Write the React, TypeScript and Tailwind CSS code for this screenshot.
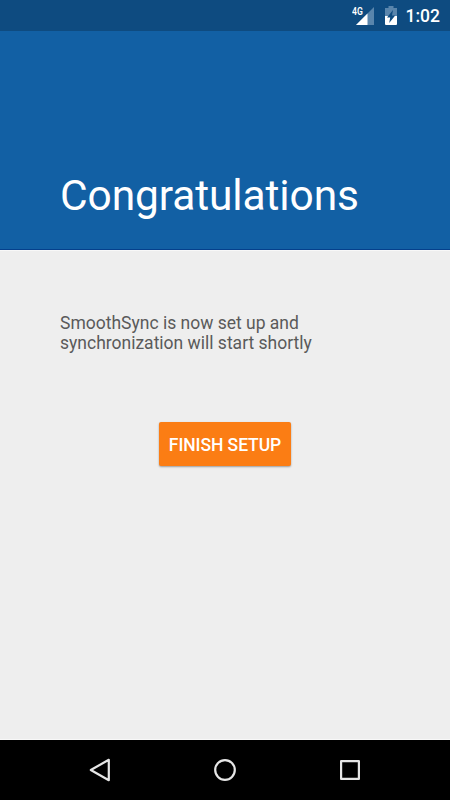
const SignalIcon = () => {
	return (
		<svg width="24" height="20" viewBox="0 0 24 20">
			<path d="M22 2v18H4z" fill="#5985ac" />
			<path d="M15.5 8.5V20H4z" fill="#fff" />
			<text
				x="0"
				y="10"
				fill="#fff"
				fontSize="10.8"
				fontWeight="600"
				textLength="10.8"
				lengthAdjust="spacingAndGlyphs"
				className="font-['Roboto',sans-serif]">
				4G
			</text>
		</svg>
	);
};

const BatteryIcon = () => {
	return (
		<svg width="13" height="19" viewBox="0 0 13 19">
			<path d="M3.5 0h5v2H12v8H0V2h3.5z" fill="#5985ac" />
			<path d="M0 10h12v8a1 1 0 0 1-1 1H1a1 1 0 0 1-1-1z" fill="#fff" />
			<path d="M8 4 2 11.5h3.2l-1 5.5 6-7.5H7z" fill="#0e4b80" />
		</svg>
	);
};

const StatusBar = () => {
	return (
		<div className="flex justify-end h-[31px] pr-[10px] bg-[#0e4b80] text-white">
			<div className="pt-[5px]">
				<SignalIcon />
			</div>
			<div className="pt-[6px] ml-[9px]">
				<BatteryIcon />
			</div>
			<p className="ml-[8px] pt-[6px] text-[17.5px] leading-[21px] font-medium">
				1:02
			</p>
		</div>
	);
};

const NavigationBar = () => {
	return (
		<div className="flex items-center justify-center h-[60px] gap-[101px] bg-black">
			<svg
				width="24"
				height="24"
				fill="none"
				stroke="#e6e6e6"
				strokeWidth="2.2"
				strokeLinejoin="round">
				<path d="M2.8 12 20.8 1.8v20.4z" />
			</svg>
			<svg width="24" height="24" fill="none" stroke="#e6e6e6" strokeWidth="2.2">
				<circle cx="12" cy="12" r="9.8" />
			</svg>
			<svg
				width="24"
				height="24"
				fill="none"
				stroke="#e6e6e6"
				strokeWidth="2.2"
				strokeLinejoin="round">
				<path d="M3.1 3.1h17.8v17.8H3.1z" />
			</svg>
		</div>
	);
};

const App = () => {
	return (
		<div className="flex flex-col w-[450px] h-[800px] overflow-hidden bg-[#eeeeee] font-['Roboto',sans-serif]">
			<StatusBar />
			<header className="h-[219px] px-[60px] pt-[140px] bg-[#1260a4] border-b border-[#05408c]">
				<h1 className="text-[42.5px] leading-[50px] tracking-[-0.12px] text-white">
					Congratulations
				</h1>
			</header>

			<main className="flex flex-col items-center flex-1 border-y border-[#f8f8f8]">
				<p className="w-[330px] mt-[62px] text-[17.5px] leading-[20.4px] text-[#5a5a5a]">
					SmoothSync is now set up and
					<br />
					synchronization will start shortly
				</p>
				<button className="w-[132px] h-[44.5px] mt-[67.7px] pt-[3px] rounded-[2px] bg-[#fb7d14] text-[17.5px] font-medium tracking-[-0.08px] text-white whitespace-nowrap shadow-[0_1px_2px_rgba(0,0,0,0.35)]">
					FINISH SETUP
				</button>
			</main>

			<NavigationBar />
		</div>
	);
};

export default App;
